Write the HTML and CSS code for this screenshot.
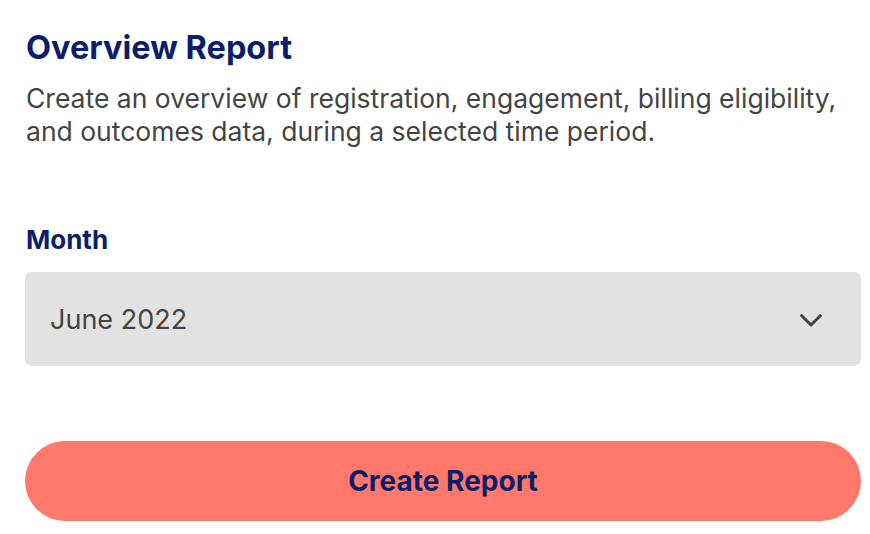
FILE: index.html
```html
<!DOCTYPE html>
<html lang="en">
<head>
  <meta charset="UTF-8" />
  <meta name="viewport" content="width=device-width, initial-scale=1.0"/>
  <title>Overview Report</title>
  <link rel="stylesheet" href="styles.css">
</head>
<body>
  <div class="panel">
    <h1 class="title">Overview Report</h1>
    <p class="desc">Create an overview of registration, engagement, billing eligibility, and outcomes data, during a selected time period.</p>

    <div class="field">
      <label class="label" for="month">Month</label>
      <div class="select" id="month">
        <span>June 2022</span>
        <svg class="chevron" width="24" height="15" viewBox="0 0 24 15">
          <path d="M2.5 2.5 L12 12 L21.5 2.5" fill="none" stroke="#444" stroke-width="3" stroke-linecap="round" stroke-linejoin="round"/>
        </svg>
      </div>
    </div>

    <button class="create">Create Report</button>
  </div>
</body>
</html>
```

FILE: styles.css
```css
body {
  margin: 0;
  background: #ffffff;
  font-family: Inter, 'Noto Sans', sans-serif;
  color: #444444;
}

.panel {
  padding: 28px 9px 0 25px;
  display: flex;
  flex-direction: column;
}

.title {
  margin: 0 0 14px 1px;
  font-size: 32.5px;
  line-height: 40px;
  font-weight: 700;
  color: #0c1e6a;
}

.desc {
  margin: 0 0 0 1px;
  font-size: 26.5px;
  line-height: 33px;
}

.field {
  margin-top: 77px;
  display: flex;
  flex-direction: column;
}

.label {
  margin-left: 1px;
  font-size: 26px;
  line-height: 30px;
  font-weight: 700;
  color: #0c1e6a;
}

/* custom dropdown look */
.select {
  margin-top: 17px;
  height: 94px;
  background: #e2e2e2;
  border-radius: 7px;
  padding: 0 38px 0 25px;
  display: flex;
  align-items: center;
  justify-content: space-between;
  font-size: 27px;
  line-height: 33px;
  color: #444444;
}

.chevron {
  margin-top: 2px;
}

.create {
  margin-top: 75px;
  height: 80px;
  border: none;
  border-radius: 40px;
  background: #ff7869;
  color: #0c1e6a;
  font-family: inherit;
  font-size: 28px;
  font-weight: 700;
  cursor: pointer;
}
```
